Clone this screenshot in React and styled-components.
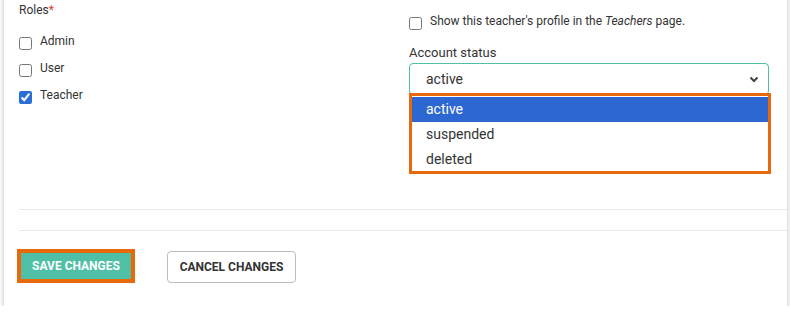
import React from "react";
import styled, {createGlobalStyle} from "styled-components";

const GlobalStyle = createGlobalStyle`
  html, body {
    margin: 0;
    padding: 0;
    background: #fff;
  }
  body {
    font-family: Roboto, "Liberation Sans", Arial, sans-serif;
    color: #333;
  }
`;

const Card = styled.div`
  margin: -12px 4px 0 4px;
  padding: 12px 0 23px 0;
  width: 783px;
  background: #fff;
  box-shadow: 0 2px 5px rgba(0, 0, 0, 0.28);
`;

const Fields = styled.div`
  display: grid;
  grid-template-columns: 390px 360px;
  padding: 2px 0 0 15px;
  height: 209px;
  box-sizing: border-box;
`;

const Column = styled.div`
  display: flex;
  flex-direction: column;
`;

const Label = styled.div`
  font-size: ${p => p.size || 12}px;
  line-height: 16px;
  margin-top: ${p => p.top || 0}px;
`;

const Required = styled.span`
  color: #e53935;
`;

const CheckRow = styled.label`
  display: flex;
  align-items: flex-start;
  gap: ${p => p.gap || 8}px;
  height: ${p => p.height || 27}px;
  font-size: 12px;
  line-height: 16px;
  margin-top: ${p => p.top || 0}px;
`;

const Box = styled.input.attrs({type: "checkbox"})`
  width: 13px;
  height: 13px;
  margin: 4px 0 0 0;
  accent-color: #2b6fd6;
  flex-shrink: 0;
`;

const SelectWrap = styled.div`
  position: relative;
  margin-top: 2px;
  width: 360px;
`;

const SelectBox = styled.div`
  height: 32px;
  box-sizing: border-box;
  border: 1px solid #4fbfa5;
  border-radius: 4px;
  display: flex;
  align-items: center;
  justify-content: space-between;
  padding: 0 9px 0 16px;
  font-size: 14px;
`;

const Menu = styled.ul`
  position: absolute;
  top: 30px;
  left: 0;
  width: 362px;
  box-sizing: border-box;
  margin: 0;
  padding: 1px 0 0 0;
  list-style: none;
  border: 3px solid #e8690c;
  background: #fff;
  height: 81px;
`;

const Option = styled.li`
  height: 25px;
  line-height: 25px;
  padding-left: 14px;
  font-size: 14px;
  background: ${p => (p.selected ? "#2d67d1" : "transparent")};
  color: ${p => (p.selected ? "#fff" : "#333")};
`;

const Divider = styled.hr`
  border: 0;
  border-top: 1px solid #e8e8e8;
  margin: 0 0 ${p => p.after || 0}px 15px;
`;

const Actions = styled.div`
  display: flex;
  align-items: flex-end;
  gap: 32px;
  padding-left: 13px;
`;

const Button = styled.button`
  font-family: Roboto, "Liberation Sans", Arial, sans-serif;
  font-weight: 700;
  font-size: 12px;
  text-transform: uppercase;
  box-sizing: border-box;
  cursor: pointer;
  ${p =>
    p.primary
      ? `
    width: 118px;
    height: 34px;
    background: #4fbfa5;
    color: #fff;
    border: 4px solid #e8690c;
    border-radius: 0;
    padding: 0;
  `
      : `
    width: 129px;
    height: 32px;
    background: #fff;
    color: #333;
    border: 1px solid #bdbdbd;
    border-radius: 4px;
    padding: 0;
  `}
`;

const Chevron = () => (
  <svg width="10" height="7" viewBox="0 0 10 7">
    <polyline points="1.5,1.5 5,5 8.5,1.5" fill="none" stroke="#444" strokeWidth="2"/>
  </svg>
);

const App = () => (
  <>
    <GlobalStyle/>
    <Card>
      <Fields>
        <Column>
          <Label>Roles<Required>*</Required></Label>
          <CheckRow top={15}><Box/>Admin</CheckRow>
          <CheckRow><Box/>User</CheckRow>
          <CheckRow><Box defaultChecked/>Teacher</CheckRow>
        </Column>
        <Column>
          <CheckRow top={11} height={16}>
            <Box/>
            <span>Show this teacher's profile in the <i>Teachers</i> page.</span>
          </CheckRow>
          <Label size={13} top={16}>Account status</Label>
          <SelectWrap>
            <SelectBox>
              <span>active</span>
              <Chevron/>
            </SelectBox>
            <Menu>
              <Option selected>active</Option>
              <Option>suspended</Option>
              <Option>deleted</Option>
            </Menu>
          </SelectWrap>
        </Column>
      </Fields>
      <Divider after={20}/>
      <Divider after={18}/>
      <Actions>
        <Button primary>Save changes</Button>
        <Button>Cancel changes</Button>
      </Actions>
    </Card>
  </>
);

export default App;
